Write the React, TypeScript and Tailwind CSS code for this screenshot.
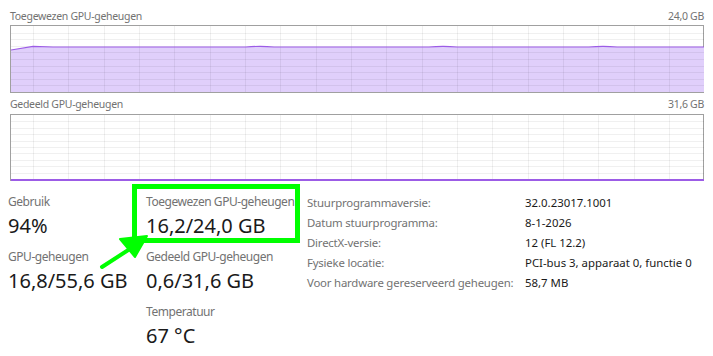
import React from "react";

const COLS = Array.from({ length: 19 }, (_, i) => 22 + i * 35.33);
const ROWS = Array.from({ length: 9 }, (_, i) => (i + 1) * 6.6);

const line =
  "M0 24 L22 20.4 L42 21 L235 21 Q249 19.8 263 21 L418 21 Q432 19.8 446 21 L578 21 Q592 19.8 606 21 L693 21";

const Grid = ({ h }: { h: number }) => (
  <g stroke="rgba(0,0,0,0.06)" strokeWidth="1">
    {COLS.map((x) => (
      <line key={"c" + x} x1={Math.round(x) + 0.5} y1={0} x2={Math.round(x) + 0.5} y2={h} />
    ))}
    {ROWS.map((y) => (
      <line key={"r" + y} x1={0} y1={Math.round((y * h) / 66) + 0.5} x2={693} y2={Math.round((y * h) / 66) + 0.5} />
    ))}
  </g>
);

const ChartHeader = ({ title, max }: { title: string; max: string }) => (
  <div className="flex justify-between h-[16px] leading-[16px] text-[10.5px] tracking-[-0.3px] text-[#727272]">
    <span>{title}</span>
    <span>{max}</span>
  </div>
);

const Stat = ({ label, value }: { label: string; value: string }) => (
  <div className="mb-[7px]">
    <div className="h-[18px] leading-[18px] text-[12px] tracking-[-0.45px] whitespace-nowrap text-[#727272]">{label}</div>
    <div className="h-[30px] leading-[30px] text-[20px] text-[#1a1a1a] whitespace-nowrap">{value}</div>
  </div>
);

const details = [
  ["Stuurprogrammaversie:", "32.0.23017.1001"],
  ["Datum stuurprogramma:", "8-1-2026"],
  ["DirectX-versie:", "12 (FL 12.2)"],
  ["Fysieke locatie:", "PCI-bus 3, apparaat 0, functie 0"],
  ["Voor hardware gereserveerd geheugen:", "58,7 MB"],
];

export default function App() {
  return (
    <div className="relative w-[713px] h-[356px] overflow-hidden bg-white font-['Segoe_UI','Noto_Sans',sans-serif]">
      <div className="pl-[10px] pr-[9px] pt-[8px]">
        <ChartHeader title="Toegewezen GPU-geheugen" max="24,0 GB" />
        <div className="mt-[1px] h-[68px] border border-[#a0a0a0]">
          <svg width="693" height="66" className="block">
            <path d={line + " L693 66 L0 66 Z"} fill="#e0cffb" />
            <Grid h={66} />
            <path d={line} fill="none" stroke="#9c5ce6" strokeWidth="1.2" />
          </svg>
        </div>

        <div className="mt-[3px]">
          <ChartHeader title="Gedeeld GPU-geheugen" max="31,6 GB" />
        </div>
        <div className="mt-[2px] h-[67px] border border-[#a0a0a0] border-b-0">
          <svg width="693" height="66" className="block">
            <Grid h={64} />
            <line x1="0" y1="65" x2="693" y2="65" stroke="#9c5ce6" strokeWidth="2" />
          </svg>
        </div>
      </div>

      <div className="flex items-start pt-[12px]">
        <div className="w-[146px] pl-[8px]">
          <Stat label="Gebruik" value="94%" />
          <Stat label="GPU-geheugen" value="16,8/55,6 GB" />
        </div>
        <div className="w-[153px]">
          <Stat label="Toegewezen GPU-geheugen" value="16,2/24,0 GB" />
          <Stat label="Gedeeld GPU-geheugen" value="0,6/31,6 GB" />
          <Stat label="Temperatuur" value="67 °C" />
        </div>
        <div className="grid grid-cols-[218px_1fr] content-start pl-[8px] text-[11.4px] leading-[20px] whitespace-nowrap">
          {details.map(([k, v]) => (
            <React.Fragment key={k}>
              <span className="text-[#727272] tracking-[-0.2px]">{k}</span>
              <span className="text-[#1a1a1a]">{v}</span>
            </React.Fragment>
          ))}
        </div>
      </div>

      <svg className="absolute left-0 top-0 pointer-events-none" width="713" height="356">
        <rect x="134.5" y="186.5" width="163" height="54" fill="none" stroke="#00ff00" strokeWidth="5" />
        <line x1="102" y1="267" x2="136" y2="245" stroke="#00ff00" strokeWidth="4" strokeLinecap="round" />
        <polygon points="120,239 147,236 135,257" fill="#00ff00" stroke="#00ff00" strokeWidth="2" strokeLinejoin="round" />
      </svg>
    </div>
  );
}
